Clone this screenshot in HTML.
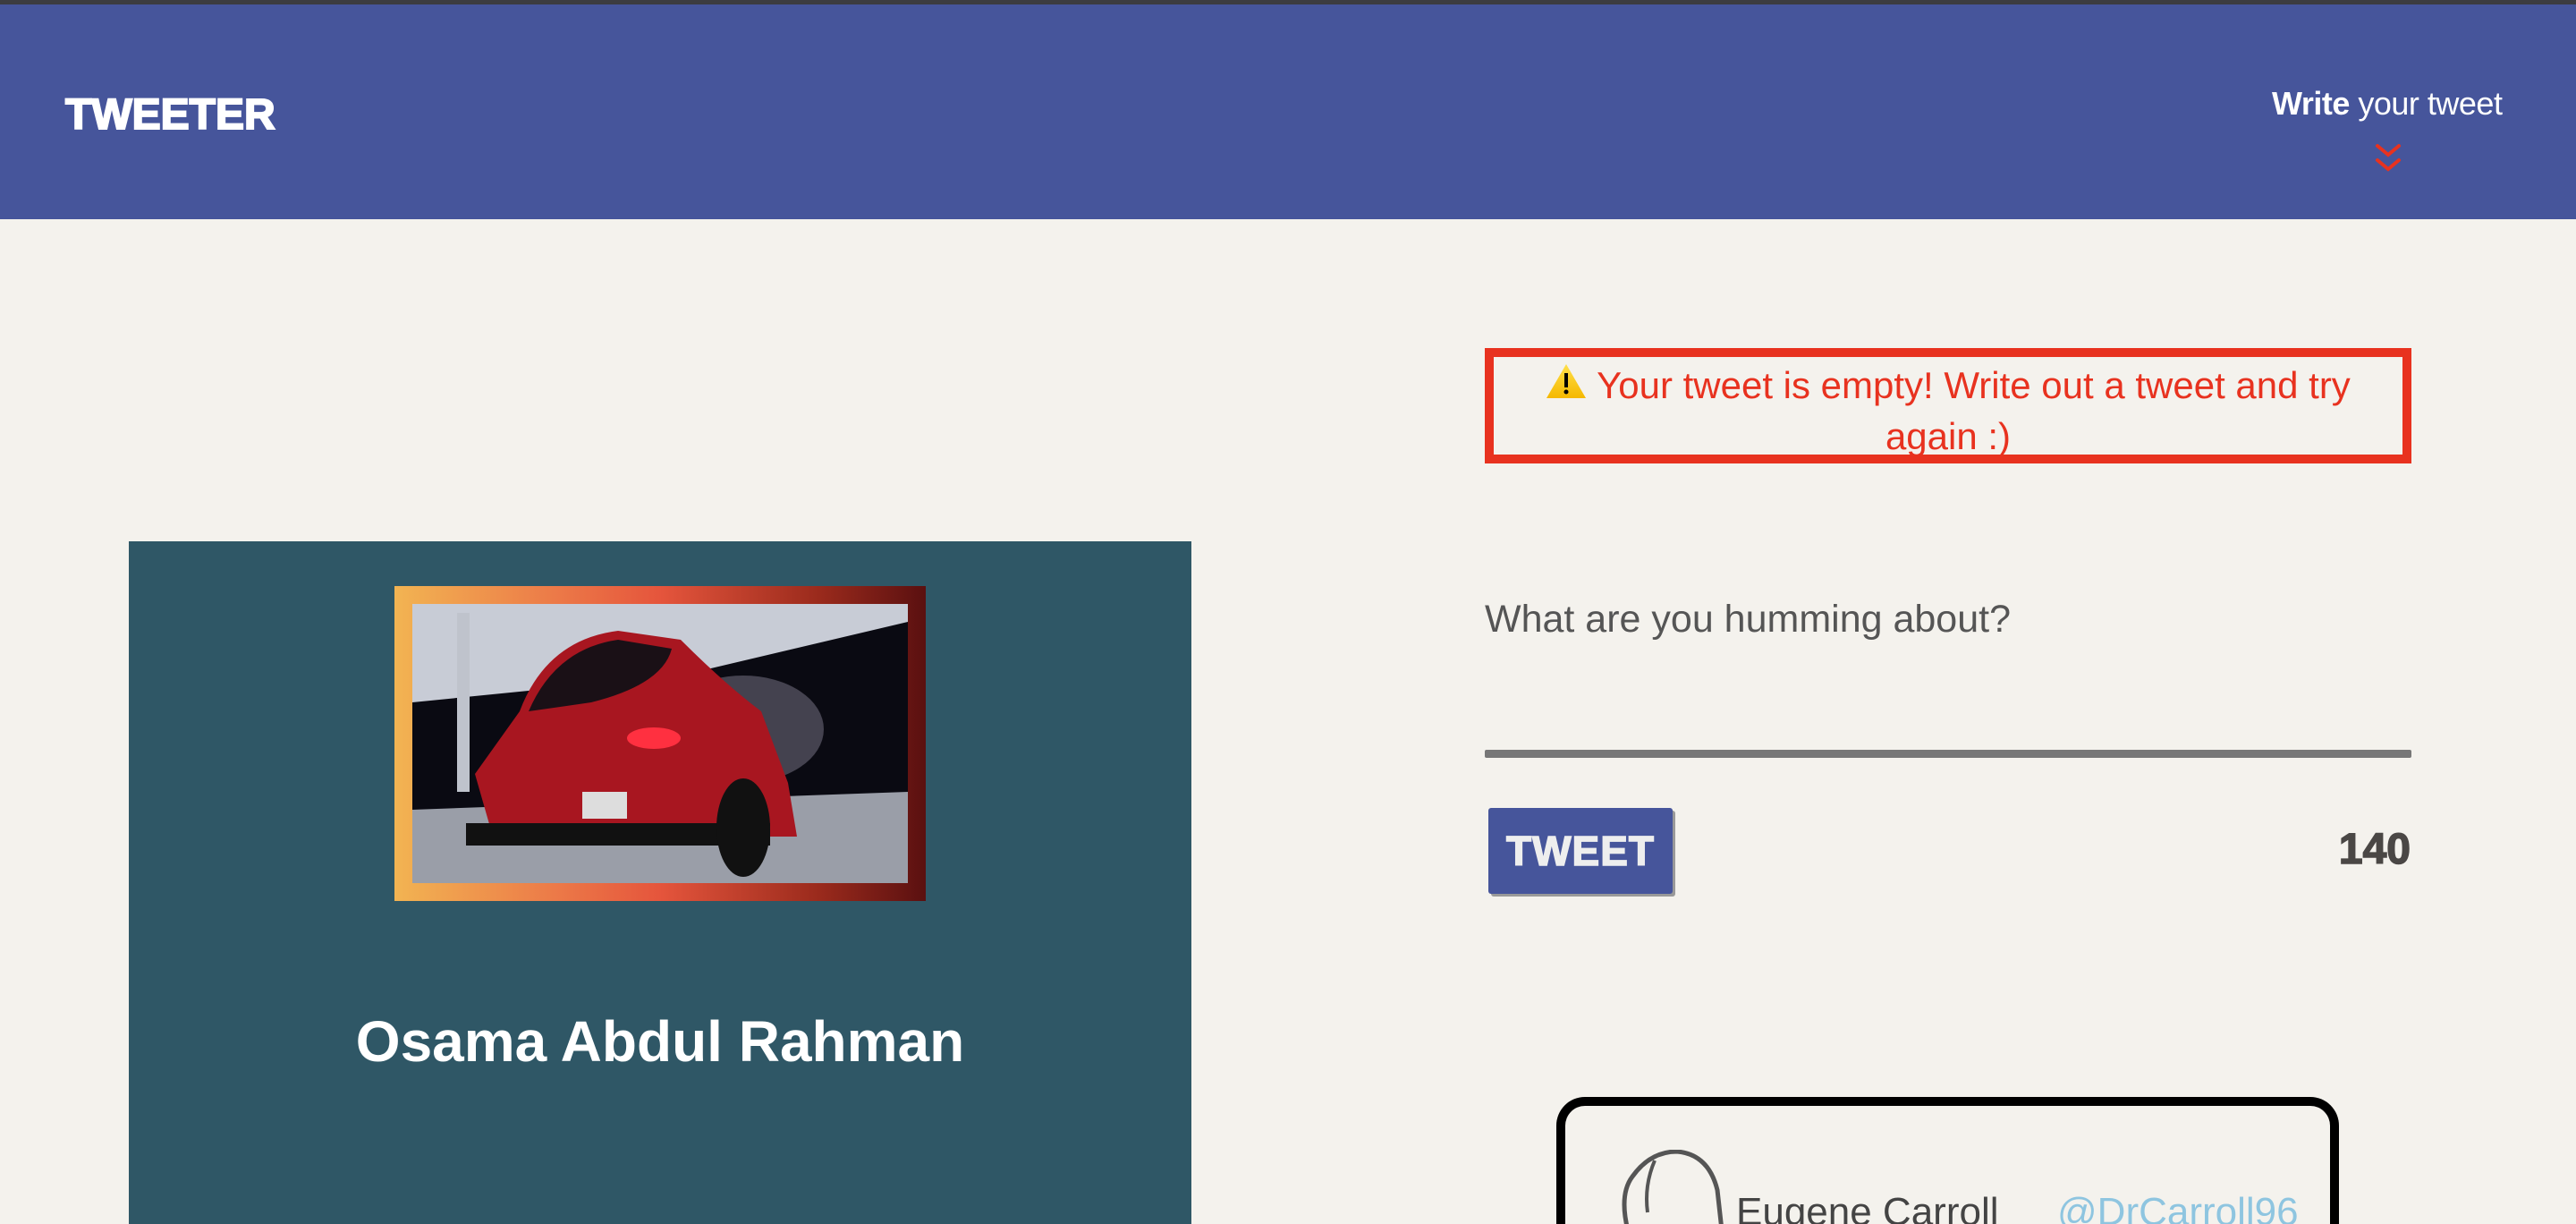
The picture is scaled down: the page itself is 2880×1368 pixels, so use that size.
<!DOCTYPE html>
<html><head><meta charset="utf-8"><style>
*{margin:0;padding:0;box-sizing:border-box}
html,body{width:2880px;height:1368px;overflow:hidden}
body{background:#f4f2ed;font-family:"Liberation Sans",sans-serif;position:relative}
.top{position:absolute;left:0;top:0;width:2880px;height:5px;background:#3c3c40}
.hdr{position:absolute;left:0;top:5px;width:2880px;height:240px;background:#46559b}
.logo{position:absolute;left:73px;top:96px;font-size:48px;font-weight:900;color:#fff;letter-spacing:0px;-webkit-text-stroke:2px #fff}
.nav{position:absolute;left:2540px;top:90px;font-size:36px;color:#fff;white-space:nowrap;letter-spacing:-0.5px}
.err{position:absolute;left:1660px;top:389px;width:1036px;height:129px;border:10px solid #e8321f;color:#e8321f;font-size:42px;text-align:center;line-height:55px;padding-top:4px}
.ph{position:absolute;left:1660px;top:668px;font-size:43px;color:#555}
.bar{position:absolute;left:1660px;top:838px;width:1036px;height:9px;background:#777;border-radius:2px}
.btn{position:absolute;left:1664px;top:903px;width:206px;height:96px;background:#46559b;box-shadow:3px 3px 0 #999;border-radius:3px;color:#eee;font-size:46px;font-weight:900;text-align:center;line-height:96px;letter-spacing:1px;-webkit-text-stroke:1.5px #eee}
.cnt{position:absolute;left:2560px;top:922px;width:135px;text-align:right;font-size:48px;font-weight:900;color:#4a4745;-webkit-text-stroke:1.5px #4a4745}
.prof{position:absolute;left:144px;top:605px;width:1188px;height:763px;background:#2f5766}
.frame{position:absolute;left:441px;top:655px;width:594px;height:352px;background:linear-gradient(90deg,#f2b452 0%,#ec7a48 30%,#e5553c 50%,#9a2a1c 80%,#5a1010 100%)}
.photo{position:absolute;left:461px;top:675px;width:554px;height:312px}
.name{position:absolute;left:144px;top:1127px;width:1188px;text-align:center;color:#fff;font-size:64px;font-weight:bold}
.card{position:absolute;left:1740px;top:1226px;width:875px;height:142px;border:10px solid #000;border-bottom:none;border-radius:32px 32px 0 0}
.en{position:absolute;left:1941px;top:1330px;font-size:44px;color:#444}
.hd{position:absolute;left:2300px;top:1330px;font-size:44px;color:#8ec5e0}
</style></head><body>
<div class="top"></div>
<div class="hdr">
<div class="logo">TWEETER</div>
<div class="nav"><b>Write</b> your tweet</div>
<svg style="position:absolute;left:2655px;top:155px" width="30" height="34" viewBox="0 0 30 34"><path d="M3 3 L15 13 L27 3 M3 19 L15 29 L27 19" stroke="#e8321f" stroke-width="4" fill="none" stroke-linecap="round"/></svg>
</div>
<div class="err"><span style="display:inline-block;width:46px;vertical-align:-2px"><svg width="46" height="42" viewBox="0 0 46 42"><defs><linearGradient id="w" x1="0" y1="0" x2="0" y2="1"><stop offset="0" stop-color="#ffe04a"/><stop offset="1" stop-color="#f5b800"/></linearGradient></defs><path d="M23 2 L45 40 L1 40 Z" fill="url(#w)"/><rect x="21" y="12" width="4" height="16" fill="#000"/><circle cx="23" cy="33" r="2.5" fill="#000"/></svg></span> Your tweet is empty! Write out a tweet and try<br>again :)</div>
<div class="ph">What are you humming about?</div>
<div class="bar"></div>
<div class="btn">TWEET</div>
<div class="cnt">140</div>
<div class="prof"></div>
<div class="frame"></div>
<svg class="photo" viewBox="0 0 554 312">
<rect width="554" height="312" fill="#0a0a12"/>
<polygon points="0,0 554,0 554,20 300,80 0,110" fill="#c8ccd6"/>
<rect x="50" y="10" width="14" height="200" fill="#bfc3cc"/>
<ellipse cx="370" cy="140" rx="90" ry="60" fill="#6b6878" opacity=".6"/>
<polygon points="0,230 554,210 554,312 0,312" fill="#9a9ea8"/>
<path d="M120 120 Q150 40 230 30 L300 40 Q350 90 390 120 L420 200 L430 260 L90 260 L70 190 Z" fill="#a81620"/>
<path d="M130 120 Q160 50 230 40 L290 50 Q280 90 200 110 Z" fill="#1a1016"/>
<rect x="60" y="245" width="340" height="25" fill="#111"/>
<ellipse cx="370" cy="250" rx="30" ry="55" fill="#111"/>
<rect x="190" y="210" width="50" height="30" fill="#ddd"/>
<ellipse cx="270" cy="150" rx="30" ry="12" fill="#ff3040"/>
</svg>
<div class="name">Osama Abdul Rahman</div>
<div class="card"></div>
<svg style="position:absolute;left:1810px;top:1285px" width="125" height="90" viewBox="0 0 125 90"><path d="M10 90 Q0 50 15 30 Q35 2 65 2 Q100 5 110 45 L115 90" stroke="#555" stroke-width="5" fill="none"/><path d="M40 12 Q28 40 32 70" stroke="#555" stroke-width="4" fill="none"/></svg>
<div class="en">Eugene Carroll</div>
<div class="hd">@DrCarroll96</div>
</body></html>
